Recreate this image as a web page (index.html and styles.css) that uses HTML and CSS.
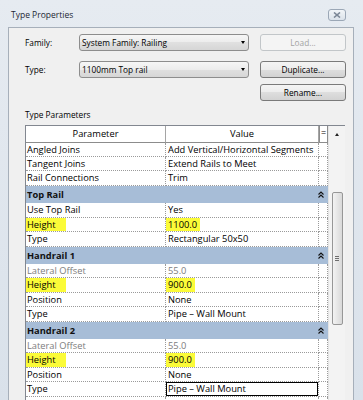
FILE: index.html
```html
<!DOCTYPE html>
<html>
<head>
  <title>Type Properties</title>
  <link rel="stylesheet" href="styles.css">
</head>
<body>

  <div class="window">
    <div class="titlebar">
      <span class="title">Type Properties</span>
      <div class="close-btn">
        <svg width="8" height="6" viewBox="0 0 8 6">
          <path d="M1 0.5 L7 5.5 M7 0.5 L1 5.5" stroke="#7c8796" stroke-width="1.6" fill="none"/>
        </svg>
      </div>
    </div>

    <div class="client">
      <div class="form-row">
        <label class="field-label">Family:</label>
        <div class="combo"><span>System Family: Railing</span><span class="arrow"></span></div>
        <button class="btn" disabled>Load...</button>
      </div>
      <div class="form-row row-type">
        <label class="field-label">Type:</label>
        <div class="combo"><span>1100mm Top rail</span><span class="arrow"></span></div>
        <button class="btn">Duplicate...</button>
      </div>
      <div class="form-row row-rename">
        <button class="btn">Rename...</button>
      </div>

      <div class="section-label">Type Parameters</div>

      <div class="grid-panel">
        <div class="sheet">
          <div class="row head">
            <div class="cell">Parameter</div>
            <div class="cell">Value</div>
            <div class="cell eq">=</div>
          </div>

          <div class="row">
            <div class="cell">Angled Joins</div>
            <div class="cell val">Add Vertical/Horizontal Segments</div>
            <div class="cell"></div>
          </div>
          <div class="row">
            <div class="cell">Tangent Joins</div>
            <div class="cell val">Extend Rails to Meet</div>
            <div class="cell"></div>
          </div>
          <div class="row">
            <div class="cell">Rail Connections</div>
            <div class="cell val">Trim</div>
            <div class="cell"></div>
          </div>

          <div class="group">
            <span>Top Rail</span>
            <svg class="chevron" width="6" height="7" viewBox="0 0 6 7">
              <path d="M0.5 3.5 L3 1 L5.5 3.5 M0.5 6.5 L3 4 L5.5 6.5" stroke="#111" stroke-width="1.1" fill="none"/>
            </svg>
          </div>
          <div class="row">
            <div class="cell">Use Top Rail</div>
            <div class="cell val">Yes</div>
            <div class="cell"></div>
          </div>
          <div class="row">
            <div class="cell hl-cell"><span class="hl">Height</span></div>
            <div class="cell hl-cell"><span class="hl hl-val">1100.0</span></div>
            <div class="cell"></div>
          </div>
          <div class="row">
            <div class="cell">Type</div>
            <div class="cell val">Rectangular 50x50</div>
            <div class="cell"></div>
          </div>

          <div class="group">
            <span>Handrail 1</span>
            <svg class="chevron" width="6" height="7" viewBox="0 0 6 7">
              <path d="M0.5 3.5 L3 1 L5.5 3.5 M0.5 6.5 L3 4 L5.5 6.5" stroke="#111" stroke-width="1.1" fill="none"/>
            </svg>
          </div>
          <div class="row">
            <div class="cell muted">Lateral Offset</div>
            <div class="cell val muted">55.0</div>
            <div class="cell"></div>
          </div>
          <div class="row">
            <div class="cell hl-cell"><span class="hl">Height</span></div>
            <div class="cell hl-cell"><span class="hl hl-val">900.0</span></div>
            <div class="cell"></div>
          </div>
          <div class="row">
            <div class="cell">Position</div>
            <div class="cell val">None</div>
            <div class="cell"></div>
          </div>
          <div class="row">
            <div class="cell">Type</div>
            <div class="cell val">Pipe – Wall Mount</div>
            <div class="cell"></div>
          </div>

          <div class="group">
            <span>Handrail 2</span>
            <svg class="chevron" width="6" height="7" viewBox="0 0 6 7">
              <path d="M0.5 3.5 L3 1 L5.5 3.5 M0.5 6.5 L3 4 L5.5 6.5" stroke="#111" stroke-width="1.1" fill="none"/>
            </svg>
          </div>
          <div class="row">
            <div class="cell muted">Lateral Offset</div>
            <div class="cell val muted">55.0</div>
            <div class="cell"></div>
          </div>
          <div class="row">
            <div class="cell hl-cell"><span class="hl">Height</span></div>
            <div class="cell hl-cell"><span class="hl hl-val">900.0</span></div>
            <div class="cell"></div>
          </div>
          <div class="row">
            <div class="cell">Position</div>
            <div class="cell val">None</div>
            <div class="cell"></div>
          </div>
          <div class="row">
            <div class="cell">Type</div>
            <div class="cell val selected">Pipe – Wall Mount</div>
            <div class="cell"></div>
          </div>
          <div class="row">
            <div class="cell"></div>
            <div class="cell"></div>
            <div class="cell"></div>
          </div>
        </div>

        <div class="scrollbar">
          <div class="scroll-up"><span class="up-arrow"></span></div>
          <div class="thumb"><span class="grip"></span></div>
        </div>
      </div>
    </div>
  </div>

</body>
</html>
```

FILE: styles.css
```css
body {
  margin: 0;
  padding: 0;
  background-color: #dce3ec;
  font-family: "Open Sans", "Noto Sans", sans-serif;
}

.window {
  width: 363px;
  height: 400px;
  display: flex;
  flex-direction: column;
  background: linear-gradient(#e6ebf1, #d9e1ea);
  overflow: hidden;
}

/* title bar */
.titlebar {
  height: 27px;
  flex-shrink: 0;
  display: flex;
  justify-content: space-between;
  align-items: flex-start;
  padding-left: 11px;
  padding-right: 17px;
}

.title {
  margin-top: 9px;
  font-size: 8.5px;
  line-height: 12px;
  color: #1c2633;
}

.close-btn {
  margin-top: 9px;
  width: 18px;
  height: 12px;
  box-sizing: border-box;
  border: 1px solid #9ba7b6;
  border-radius: 3px;
  background: linear-gradient(#f2f5f8, #dbe2ea);
  display: flex;
  align-items: center;
  justify-content: center;
}

/* client area */
.client {
  flex: 1;
  display: flex;
  flex-direction: column;
  margin: 0 9px 0 8px;
  padding: 6px 0 0 16px;
  background-color: #f0f0f0;
  border: 1px solid #a6afba;
  border-bottom: none;
  min-height: 0;
}

.form-row {
  display: flex;
  align-items: center;
  height: 17px;
  flex-shrink: 0;
}

.row-type {
  margin-top: 9.5px;
}

.row-rename {
  margin-top: 6.5px;
  padding-left: 235px;
}

.field-label {
  width: 54px;
  font-size: 8.3px;
  color: #000;
}

.combo {
  width: 170px;
  height: 17px;
  box-sizing: border-box;
  border: 1px solid #8d8d8d;
  border-radius: 3px;
  background: linear-gradient(#f6f6f6, #ececec 50%, #e0e0e0 50%, #d6d6d6);
  display: flex;
  align-items: center;
  justify-content: space-between;
  padding: 0 3px 0 2px;
  font-size: 8.3px;
  margin-right: 11px;
}

.arrow {
  width: 0;
  height: 0;
  border-left: 2.5px solid transparent;
  border-right: 2.5px solid transparent;
  border-top: 3px solid #000;
}

.btn {
  width: 86px;
  height: 17px;
  padding: 0;
  box-sizing: border-box;
  border: 1px solid #7a7a7a;
  border-radius: 3px;
  background: linear-gradient(#f4f4f4, #ececec 50%, #dedede 50%, #d2d2d2);
  font-family: "Open Sans", "Noto Sans", sans-serif;
  font-size: 8.3px;
  color: #000;
}

.btn:disabled {
  border-color: #c2c6c9;
  background: #f4f4f4;
  color: #a3a3a3;
}

.section-label {
  margin-top: 7.5px;
  height: 11px;
  line-height: 11px;
  font-size: 8.3px;
  flex-shrink: 0;
}

/* property grid */
.grid-panel {
  margin-top: 5.5px;
  width: 320px;
  flex: 1;
  display: flex;
  border-top: 1px solid #828790;
  border-left: 1px solid #828790;
  overflow: hidden;
  box-sizing: border-box;
}

.sheet {
  width: 302px;
  flex-shrink: 0;
  background-color: #fff;
  font-size: 9.3px;
}

.row {
  display: grid;
  grid-template-columns: 140px 153px 9px;
  height: 14.4px;
}

.cell {
  box-sizing: border-box;
  border-right: 1px dotted #9a9a9a;
  border-bottom: 1px dotted #9a9a9a;
  line-height: 13.4px;
  padding-left: 1px;
  white-space: nowrap;
  overflow: hidden;
  color: #000;
}

.cell.val {
  padding-left: 2px;
}

.muted {
  color: #7d7d7d !important;
}

.row.head {
  height: 16.7px;
}

.row.head .cell {
  border-right: 1px solid #a5a5a5;
  border-bottom: 1px solid #8c8c8c;
  line-height: 15.7px;
  text-align: center;
  padding-left: 0;
}

.row.head .eq {
  border: 1px solid #8c8c8c;
  border-top: none;
  line-height: 14px;
  font-size: 9px;
}

.hl-cell {
  padding-left: 0;
}

.hl {
  display: inline-block;
  height: 100%;
  padding: 0 10px 0 1px;
  background-color: #fbfb38;
}

.hl.hl-val {
  padding: 0 3px 0 2px;
}

.selected {
  box-shadow: inset 0 0 0 1px #000;
}

.group {
  height: 17.5px;
  display: flex;
  align-items: center;
  justify-content: space-between;
  padding: 0 4px 0 1px;
  background-color: #a7bdd7;
  font-weight: bold;
  color: #111;
}

.chevron {
  display: block;
}

/* scrollbar */
.scrollbar {
  width: 17px;
  flex-shrink: 0;
  background-color: #f3f3f3;
  border-left: 1px solid #e4e4e4;
  box-sizing: border-box;
}

.scroll-up {
  height: 16px;
  display: flex;
  align-items: center;
  justify-content: center;
}

.up-arrow {
  width: 0;
  height: 0;
  border-left: 2.5px solid transparent;
  border-right: 2.5px solid transparent;
  border-bottom: 3px solid #222;
}

.thumb {
  margin: 50px 0 0 2.5px;
  width: 11px;
  height: 133px;
  box-sizing: border-box;
  border: 1px solid #979797;
  border-radius: 2px;
  background: linear-gradient(to right, #f3f3f3, #e6e6e6 50%, #d9d9d9);
  display: flex;
  align-items: center;
  justify-content: center;
}

.grip {
  width: 4px;
  height: 5px;
  background: repeating-linear-gradient(#6f6f6f 0, #6f6f6f 1px, transparent 1px, transparent 2px);
}
```
